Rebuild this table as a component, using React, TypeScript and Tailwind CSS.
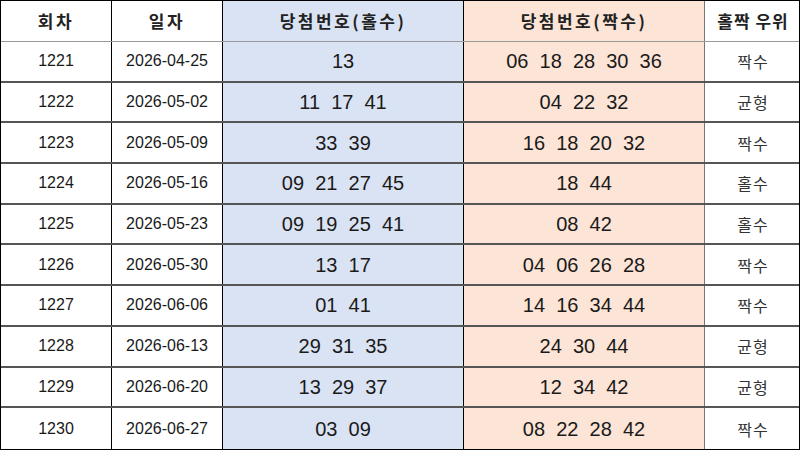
const rows: [string, string, string, string, string][] = [
  ['1221', '2026-04-25', '13', '06  18  28  30  36', '짝수'],
  ['1222', '2026-05-02', '11  17  41', '04  22  32', '균형'],
  ['1223', '2026-05-09', '33  39', '16  18  20  32', '짝수'],
  ['1224', '2026-05-16', '09  21  27  45', '18  44', '홀수'],
  ['1225', '2026-05-23', '09  19  25  41', '08  42', '홀수'],
  ['1226', '2026-05-30', '13  17', '04  06  26  28', '짝수'],
  ['1227', '2026-06-06', '01  41', '14  16  34  44', '짝수'],
  ['1228', '2026-06-13', '29  31  35', '24  30  44', '균형'],
  ['1229', '2026-06-20', '13  29  37', '12  34  42', '균형'],
  ['1230', '2026-06-27', '03  09', '08  22  28  42', '짝수'],
];

const cols = 'grid grid-cols-[111px_111px_241px_241px_96px]';
const kr = "font-['Noto_Sans_CJK_KR','Noto_Sans',sans-serif]";
const num = "font-['Liberation_Sans',Arial,sans-serif]";

export default function App() {
  return (
    <div className="w-[800px] h-[450px] overflow-hidden bg-white border border-black text-[#1a1a1a]">
      {/* header */}
      <div className={`${cols} h-[41px] border-b border-[#9a9a9a] ${kr} font-bold text-[17px] tracking-[2.5px] text-[#222]`}>
        <div className="flex items-center justify-center border-r border-black">회차</div>
        <div className="flex items-center justify-center border-r border-black">일자</div>
        <div className="flex items-center justify-center border-r border-black bg-[#dae3f3]">당첨번호(홀수)</div>
        <div className="flex items-center justify-center border-r border-[#777] bg-[#fce4d6]">당첨번호(짝수)</div>
        <div className="flex items-center justify-center tracking-[1px]">홀짝 우위</div>
      </div>

      {rows.map((r, i) => (
        <div
          key={r[0]}
          className={`${cols} h-[40.7px] ${i < rows.length - 1 ? 'border-b-2 border-[#555]' : ''}`}
        >
          <div className={`flex items-center justify-center border-r border-black ${num} text-[16px]`}>{r[0]}</div>
          <div className={`flex items-center justify-center border-r border-black ${num} text-[16px]`}>{r[1]}</div>
          <div className={`flex items-center justify-center border-r border-black bg-[#dae3f3] ${num} text-[20px] whitespace-pre`}>{r[2]}</div>
          <div className={`flex items-center justify-center border-r border-[#777] bg-[#fce4d6] ${num} text-[20px] whitespace-pre`}>{r[3]}</div>
          <div className={`flex items-center justify-center ${kr} text-[16px] tracking-[1px] text-[#333]`}>{r[4]}</div>
        </div>
      ))}
    </div>
  );
}
